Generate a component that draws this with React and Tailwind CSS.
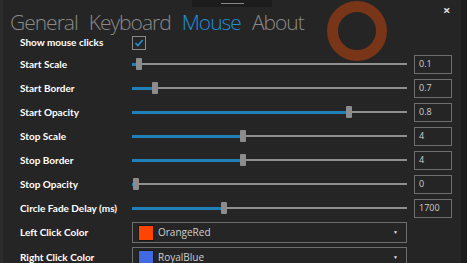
import React from "react";

const sliders = [
  { label: "Start Scale", fill: 4, value: "0.1" },
  { label: "Start Border", fill: 20, value: "0.7" },
  { label: "Start Opacity", fill: 214, value: "0.8" },
  { label: "Stop Scale", fill: 108, value: "4" },
  { label: "Stop Border", fill: 108, value: "4" },
  { label: "Stop Opacity", fill: 1, value: "0" },
  { label: "Circle Fade Delay (ms)", fill: 89, value: "1700" },
];

const colors = [
  { label: "Left Click Color", name: "OrangeRed", swatch: "bg-[#ff4500]" },
  { label: "Right Click Color", name: "RoyalBlue", swatch: "bg-[#4169e1]" },
];

const labelCls = "w-[112px] text-[10px] font-bold font-['Lato',sans-serif]";

const Slider = ({ fill }) => (
  <div className="flex items-center w-[275px] h-[12px]">
    <div className="h-[3px] bg-[#1f7fb6]" style={{ width: fill }} />
    <div className="w-[6px] h-[12px] rounded-[1px] bg-[#8c8c8c] shrink-0" />
    <div className="flex-1 h-[2px] bg-[#8f8f8f]" />
  </div>
);

const App = () => {
  return (
    <div
      className="relative flex w-[467px] h-[263px] overflow-hidden bg-[#252525] text-white"
      style={{ fontFamily: "'Open Sans', 'Noto Sans', sans-serif" }}
    >
      <div className="w-[3px] bg-[#2c2c2c] shrink-0" />

      <div className="flex-1 flex flex-col">
        <div className="shrink-0 flex items-end h-[33px] pl-[7px] gap-[11px] text-[21px] font-light leading-none tracking-[-1px] text-[#8a8a8a]">
          <span>General</span>
          <span>Keyboard</span>
          <span className="text-[#1e8ed6]">Mouse</span>
          <span>About</span>
        </div>

        <div className="shrink-0 flex items-center h-[19px] pl-[17px]">
          <span className={labelCls}>Show mouse clicks</span>
          <div className="w-[14px] h-[14px] border border-[#8a8a8a] flex items-center justify-center">
            <svg width="10" height="10" viewBox="0 0 10 10">
              <path d="M1.5 5.2 L4 7.6 L8.6 2" fill="none" stroke="#1e8ed6" strokeWidth="1.6" />
            </svg>
          </div>
        </div>

        {sliders.map((s) => (
          <div key={s.label} className="shrink-0 flex items-center h-[24px] pl-[17px]">
            <span className={labelCls}>{s.label}</span>
            <Slider fill={s.fill} />
            <div className="ml-[7px] w-[38px] h-[19px] border border-[#6e6e6e] flex items-center pl-[4px] text-[9px] text-[#cfcfcf]">
              {s.value}
            </div>
          </div>
        ))}

        <div className="shrink-0 flex flex-col gap-[4px] mt-[2px]">
          {colors.map((c) => (
            <div key={c.label} className="flex items-center h-[21px] pl-[17px]">
              <span className={labelCls}>{c.label}</span>
              <div className="w-[275px] h-[21px] border border-[#6e6e6e] flex items-center pl-[5px] pr-[8px]">
                <div className={`w-[16px] h-[16px] border border-[#1a1a1a] ${c.swatch}`} />
                <span className="ml-[4px] text-[10px] text-[#d0d0d0]">{c.name}</span>
                <span className="ml-auto text-[5px] text-[#e0e0e0]">▼</span>
              </div>
            </div>
          ))}
        </div>
      </div>

      <div className="w-[6px] bg-[#1c1c1c] shrink-0" />

      <div className="absolute left-[192px] top-0 w-[80px] h-[7px] bg-[#1c1c1c] flex justify-center items-center">
        <div className="w-[23px] h-[1px] bg-[#888888]" />
      </div>

      <div className="absolute left-[327px] top-[1px] w-[60px] h-[60px] rounded-full border-[11px] border-[#783518]" />

      <div className="absolute left-[443px] top-[4px] text-[13px] font-bold text-[#dddddd] leading-none">
        ×
      </div>
    </div>
  );
};

export default App;
